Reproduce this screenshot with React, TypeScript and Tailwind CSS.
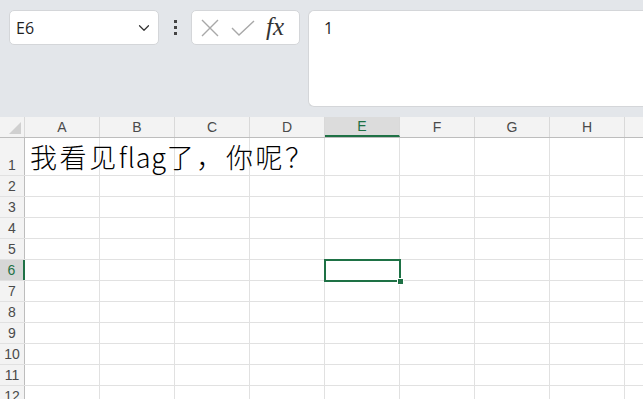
import { ChevronDown } from 'lucide-react';

const cols = ['A', 'B', 'C', 'D', 'E', 'F', 'G', 'H', 'I'];
const rows = [1, 2, 3, 4, 5, 6, 7, 8, 9, 10, 11, 12];

const font = { fontFamily: '"Liberation Sans", Arial, sans-serif' };

function CellRow({ n }: { n: number }) {
  const selected = n === 6;
  const tall = n === 1;
  return (
    <div className={`flex ${tall ? 'h-[38px]' : 'h-[21px]'} border-b border-[#e1e1e1]`}>
      <div
        className={`w-[25px] shrink-0 flex items-end justify-center text-[14px] leading-[20px] ${
          selected
            ? 'bg-[#d6d6d6] text-[#1e7145] border-r-2 border-[#1e7145]'
            : 'bg-[#f3f3f3] text-[#4a4a4a] border-r border-[#bdbdbd]'
        }`}
      >
        {n}
      </div>
      {cols.map((c) => (
        <div key={c} className="relative w-[75px] shrink-0 border-r border-[#e1e1e1]">
          {selected && c === 'E' && (
            <div className="absolute -left-[1px] -top-[1px] w-[77px] h-[23px] border-2 border-[#1e7145] z-10">
              <div className="absolute -right-[5px] -bottom-[5px] w-[7px] h-[7px] bg-[#1e7145] border border-white" />
            </div>
          )}
        </div>
      ))}
      {tall && (
        <div
          className="absolute left-[30px] top-[140px] text-[27px] font-light leading-[34px] text-black whitespace-nowrap z-10"
          style={{ fontFamily: '"Noto Sans CJK SC", "Microsoft YaHei", sans-serif' }}
        >
          <span className="tracking-[2.6px]">我看见</span>
          <span className="tracking-[0.8px]">flag</span>
          <span className="tracking-[2.6px]">了，你呢？</span>
        </div>
      )}
    </div>
  );
}

export default function App() {
  return (
    <div className="relative w-[643px] h-[399px] overflow-hidden bg-white" style={font}>
      {/* Formula area */}
      <div className="h-[117px] bg-[#e3e6ea] flex items-start gap-2 pl-[9px] pt-[10px]">
        <div className="w-[150px] h-[35px] bg-white rounded-[5px] border border-[#d4d6d9] flex items-center justify-between pl-[6px] pr-[5px]">
          <span className="text-[16px] text-[#1f1f1f]" style={{ fontFamily: '"Open Sans", sans-serif' }}>E6</span>
          <ChevronDown className="w-[18px] h-[18px] text-[#333]" strokeWidth={1.6} />
        </div>
        <div className="w-[16px] h-[35px] flex flex-col items-center justify-center gap-[3px]">
          <span className="w-[3px] h-[3px] bg-[#444]" />
          <span className="w-[3px] h-[3px] bg-[#444]" />
          <span className="w-[3px] h-[3px] bg-[#444]" />
        </div>
        <div className="w-[109px] h-[35px] bg-white rounded-[5px] border border-[#d4d6d9] flex items-center pl-[8px] gap-[11px]">
          <svg width="20" height="20" viewBox="0 0 20 20" fill="none" stroke="#a8a8a8" strokeWidth="1.4">
            <path d="M2 2 L18 18 M18 2 L2 18" />
          </svg>
          <svg width="24" height="20" viewBox="0 0 24 20" fill="none" stroke="#a8a8a8" strokeWidth="1.4">
            <path d="M1 10 L8 17 L23 3" />
          </svg>
          <span
            className="italic text-[25px] leading-none text-[#333] -mt-[3px]"
            style={{ fontFamily: '"Liberation Serif", "Times New Roman", serif' }}
          >
            fx
          </span>
        </div>
        <div className="flex-1 h-[97px] bg-white rounded-l-[6px] border border-r-0 border-[#d4d6d9] pl-[15px] pt-[5px]">
          <span className="text-[16px] text-[#1f1f1f]" style={{ fontFamily: '"Open Sans", sans-serif' }}>1</span>
        </div>
      </div>

      {/* Column headers */}
      <div className="flex h-[21px] border-b border-[#bdbdbd] bg-[#f3f3f3]">
        <div className="relative w-[25px] shrink-0 border-r border-[#d9d9d9]">
          <svg className="absolute right-[3px] bottom-[3px]" width="12" height="12" viewBox="0 0 12 12">
            <path d="M12 0 L12 12 L0 12 Z" fill="#d0d0d0" />
          </svg>
        </div>
        {cols.map((c) => (
          <div
            key={c}
            className={`w-[75px] shrink-0 flex items-center justify-center text-[14px] ${
              c === 'E'
                ? 'bg-[#dcdcdc] text-[#1e7145] border-b-2 border-[#1e7145] border-r border-r-[#d9d9d9]'
                : 'text-[#4a4a4a] border-r border-[#d9d9d9]'
            }`}
          >
            {c}
          </div>
        ))}
      </div>

      {/* Rows */}
      {rows.map((n) => (
        <CellRow key={n} n={n} />
      ))}
    </div>
  );
}
